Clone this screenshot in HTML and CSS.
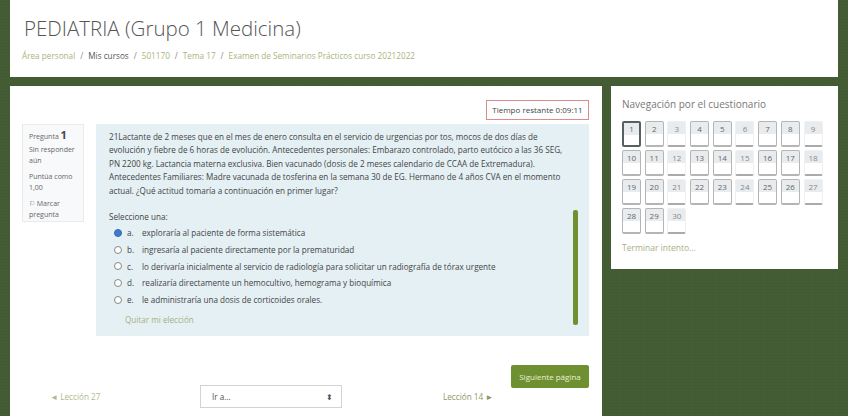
FILE: index.html
```html
<!DOCTYPE html>
<html lang="es">
<head>
  <meta charset="UTF-8">
  <title>PEDIATRIA (Grupo 1 Medicina)</title>
  <link rel="stylesheet" href="styles.css">
</head>
<body>
  <header class="page-header">
    <h1>PEDIATRIA (Grupo 1 Medicina)</h1>
    <nav class="breadcrumb">
      <a href="#">Área personal</a><span>/</span>
      <a href="#" class="dark">Mis cursos</a><span>/</span>
      <a href="#">501170</a><span>/</span>
      <a href="#">Tema 17</a><span>/</span>
      <a href="#">Examen de Seminarios Prácticos curso 20212022</a>
    </nav>
  </header>

  <div class="columns">
    <main class="quiz">
      <div class="timer-row">
        <div class="timer">Tiempo restante 0:09:11</div>
      </div>

      <div class="question">
        <aside class="info">
          <p class="qno">Pregunta <b>1</b></p>
          <p>Sin responder aún</p>
          <p>Puntúa como 1,00</p>
          <p>⚐ Marcar pregunta</p>
        </aside>

        <div class="content">
          <p class="qtext">21Lactante de 2 meses que en el mes de enero consulta en el servicio de urgencias por tos, mocos de dos días de evolución y fiebre de 6 horas de evolución. Antecedentes personales: Embarazo controlado, parto eutócico a las 36 SEG, PN 2200 kg. Lactancia materna exclusiva. Bien vacunado (dosis de 2 meses calendario de CCAA de Extremadura). Antecedentes Familiares: Madre vacunada de tosferina en la semana 30 de EG. Hermano de 4 años CVA en el momento actual. ¿Qué actitud tomaría a continuación en primer lugar?</p>
          <p class="prompt">Seleccione una:</p>
          <ul class="answers">
            <li><span class="radio checked"></span><span class="letter">a.</span>exploraría al paciente de forma sistemática</li>
            <li><span class="radio"></span><span class="letter">b.</span>ingresaría al paciente directamente por la prematuridad</li>
            <li><span class="radio"></span><span class="letter">c.</span>lo derivaría inicialmente al servicio de radiología para solicitar un radiografía de tórax urgente</li>
            <li><span class="radio"></span><span class="letter">d.</span>realizaría directamente un hemocultivo, hemograma y bioquímica</li>
            <li><span class="radio"></span><span class="letter">e.</span>le administraría una dosis de corticoides orales.</li>
          </ul>
          <a href="#" class="clear">Quitar mi elección</a>
          <div class="scrollbar"></div>
        </div>
      </div>

      <div class="next-row">
        <button class="next">Siguiente página</button>
      </div>

      <div class="pager">
        <a href="#" class="prev-link">◄ Lección 27</a>
        <div class="jump"><span>Ir a...</span><span>⬍</span></div>
        <a href="#" class="next-link">Lección 14 ►</a>
      </div>
    </main>

    <aside class="side">
      <h2>Navegación por el cuestionario</h2>
      <div class="nav-grid">
        <a class="cell current">1</a><a class="cell">2</a><a class="cell flat">3</a><a class="cell">4</a><a class="cell">5</a><a class="cell flat">6</a><a class="cell">7</a><a class="cell">8</a><a class="cell flat">9</a>
        <a class="cell">10</a><a class="cell">11</a><a class="cell flat">12</a><a class="cell">13</a><a class="cell">14</a><a class="cell flat">15</a><a class="cell">16</a><a class="cell">17</a><a class="cell flat">18</a>
        <a class="cell">19</a><a class="cell">20</a><a class="cell flat">21</a><a class="cell">22</a><a class="cell">23</a><a class="cell flat">24</a><a class="cell">25</a><a class="cell">26</a><a class="cell flat">27</a>
        <a class="cell">28</a><a class="cell">29</a><a class="cell flat">30</a>
      </div>
      <a href="#" class="finish">Terminar intento...</a>
    </aside>
  </div>
</body>
</html>
```

FILE: styles.css
```css
/* base */
body {
  margin: 0;
  padding: 0 10px;
  height: 416px;
  overflow: hidden;
  box-sizing: border-box;
  font-family: "Open Sans", "Liberation Sans", sans-serif;
  color: #444;
  background-color: #435c33;
  background-image:
    repeating-linear-gradient(90deg, rgba(255,255,255,0.012) 0 1px, transparent 1px 3px),
    repeating-linear-gradient(0deg, rgba(0,0,0,0.02) 0 1px, transparent 1px 3px);
}
a {
  color: #7a9a3c;
  text-decoration: none;
}
p {
  margin: 0;
}

/* header */
.page-header {
  background: #fff;
  height: 77px;
  padding: 14px 14px 0;
  box-sizing: border-box;
  margin-bottom: 9px;
}
.page-header h1 {
  margin: 0;
  font-size: 20.5px;
  font-weight: 300;
  line-height: 28px;
  color: #555;
}
.breadcrumb {
  display: flex;
  gap: 5px;
  margin-top: 8px;
  margin-left: -2px;
  font-size: 8.2px;
  line-height: 12px;
  color: #888;
}
.breadcrumb a {
  color: #a9b57c;
}
.breadcrumb a.dark {
  color: #555;
}

/* columns */
.columns {
  display: flex;
  align-items: flex-start;
  gap: 9px;
}
.quiz {
  width: 592px;
  height: 330px;
  box-sizing: border-box;
  background: #fff;
  padding: 14px 13px 0 12px;
}
.timer-row {
  display: flex;
  justify-content: flex-end;
  height: 24px;
}
.timer {
  width: 103px;
  height: 20px;
  box-sizing: border-box;
  border: 1px solid #dc8a8e;
  font-size: 8px;
  line-height: 18px;
  text-align: center;
}

/* question */
.question {
  display: flex;
  gap: 12px;
}
.info {
  width: 62px;
  height: 98px;
  box-sizing: border-box;
  padding: 4px 0 0 6px;
  background: #f8f9fa;
  border: 1px solid #e8eaec;
  font-size: 7px;
  line-height: 11px;
  color: #666;
}
.info p {
  margin-bottom: 5px;
}
.info .qno {
  margin-bottom: 1px;
  line-height: 12px;
}
.info b {
  font-size: 11px;
  color: #444;
}
.content {
  position: relative;
  flex: 1;
  height: 212px;
  box-sizing: border-box;
  background: #e4f0f4;
  padding: 6px 14px 0 13px;
  font-size: 8.15px;
}
.qtext {
  width: 464px;
  height: 72px;
  line-height: 13.4px;
}
.prompt {
  margin-top: 9px;
  line-height: 12px;
}
.answers {
  list-style: none;
  margin: 1.5px 0 0;
  padding: 0;
}
.answers li {
  display: flex;
  align-items: center;
  height: 16.7px;
  padding-left: 5px;
}
.radio {
  width: 8px;
  height: 8px;
  flex: none;
  box-sizing: border-box;
  border: 1px solid #888;
  border-radius: 50%;
  background: #fff;
  margin-right: 5px;
}
.radio.checked {
  border-color: #2f6db5;
  background: #3d7cc9;
}
.letter {
  width: 15px;
  flex: none;
}
.clear {
  display: block;
  margin: 6px 0 0 16px;
  color: #a9b082;
}
.scrollbar {
  position: absolute;
  right: 11px;
  top: 86px;
  width: 5px;
  height: 115px;
  border-radius: 2px;
  background: #6f9030;
}

/* buttons and paging */
.next-row {
  display: flex;
  justify-content: flex-end;
  margin-top: 29px;
}
.next {
  width: 78px;
  height: 23px;
  padding: 0;
  border: 0;
  border-radius: 2px;
  background: #6f9030;
  color: #e8efd8;
  font-family: inherit;
  font-size: 8px;
}
.pager {
  display: flex;
  align-items: center;
  margin-top: -3px;
  padding-left: 28px;
  font-size: 8.2px;
}
.prev-link {
  flex: none;
  width: 150px;
  color: #b0ba8e;
}
.next-link {
  flex: none;
  margin-left: 101px;
  color: #8d9868;
}
.jump {
  display: flex;
  flex: none;
  justify-content: space-between;
  align-items: center;
  width: 142px;
  height: 23px;
  box-sizing: border-box;
  padding: 0 8px 0 11px;
  border: 1px solid #ced4da;
  color: #555;
  background: #fff;
}

/* sidebar */
.side {
  width: 227px;
  height: 183px;
  box-sizing: border-box;
  background: #fff;
  padding: 10px 11px 0;
}
.side h2 {
  margin: 0 0 9px;
  font-size: 10px;
  font-weight: 400;
  line-height: 16px;
  color: #777;
}
.nav-grid {
  display: grid;
  grid-template-columns: repeat(9, 19px);
  grid-auto-rows: 26px;
  gap: 3px 3.7px;
}
.cell {
  box-sizing: border-box;
  height: 26px;
  padding-top: 1px;
  border: 1px solid #b5b5b5;
  border-bottom-width: 2px;
  border-radius: 2px;
  font-size: 8px;
  line-height: 11px;
  text-align: center;
  color: #666;
  background: linear-gradient(#e9ecee 0 12px, #fff 12px);
}
.cell.flat {
  border-color: #f0f0f0 #f0f0f0 #aaa;
  color: #888;
}
.cell.current {
  border: 2px solid #56625f;
  padding-top: 0;
}
.finish {
  display: block;
  margin-top: 8px;
  font-size: 8.5px;
  color: #a9b082;
}
```
